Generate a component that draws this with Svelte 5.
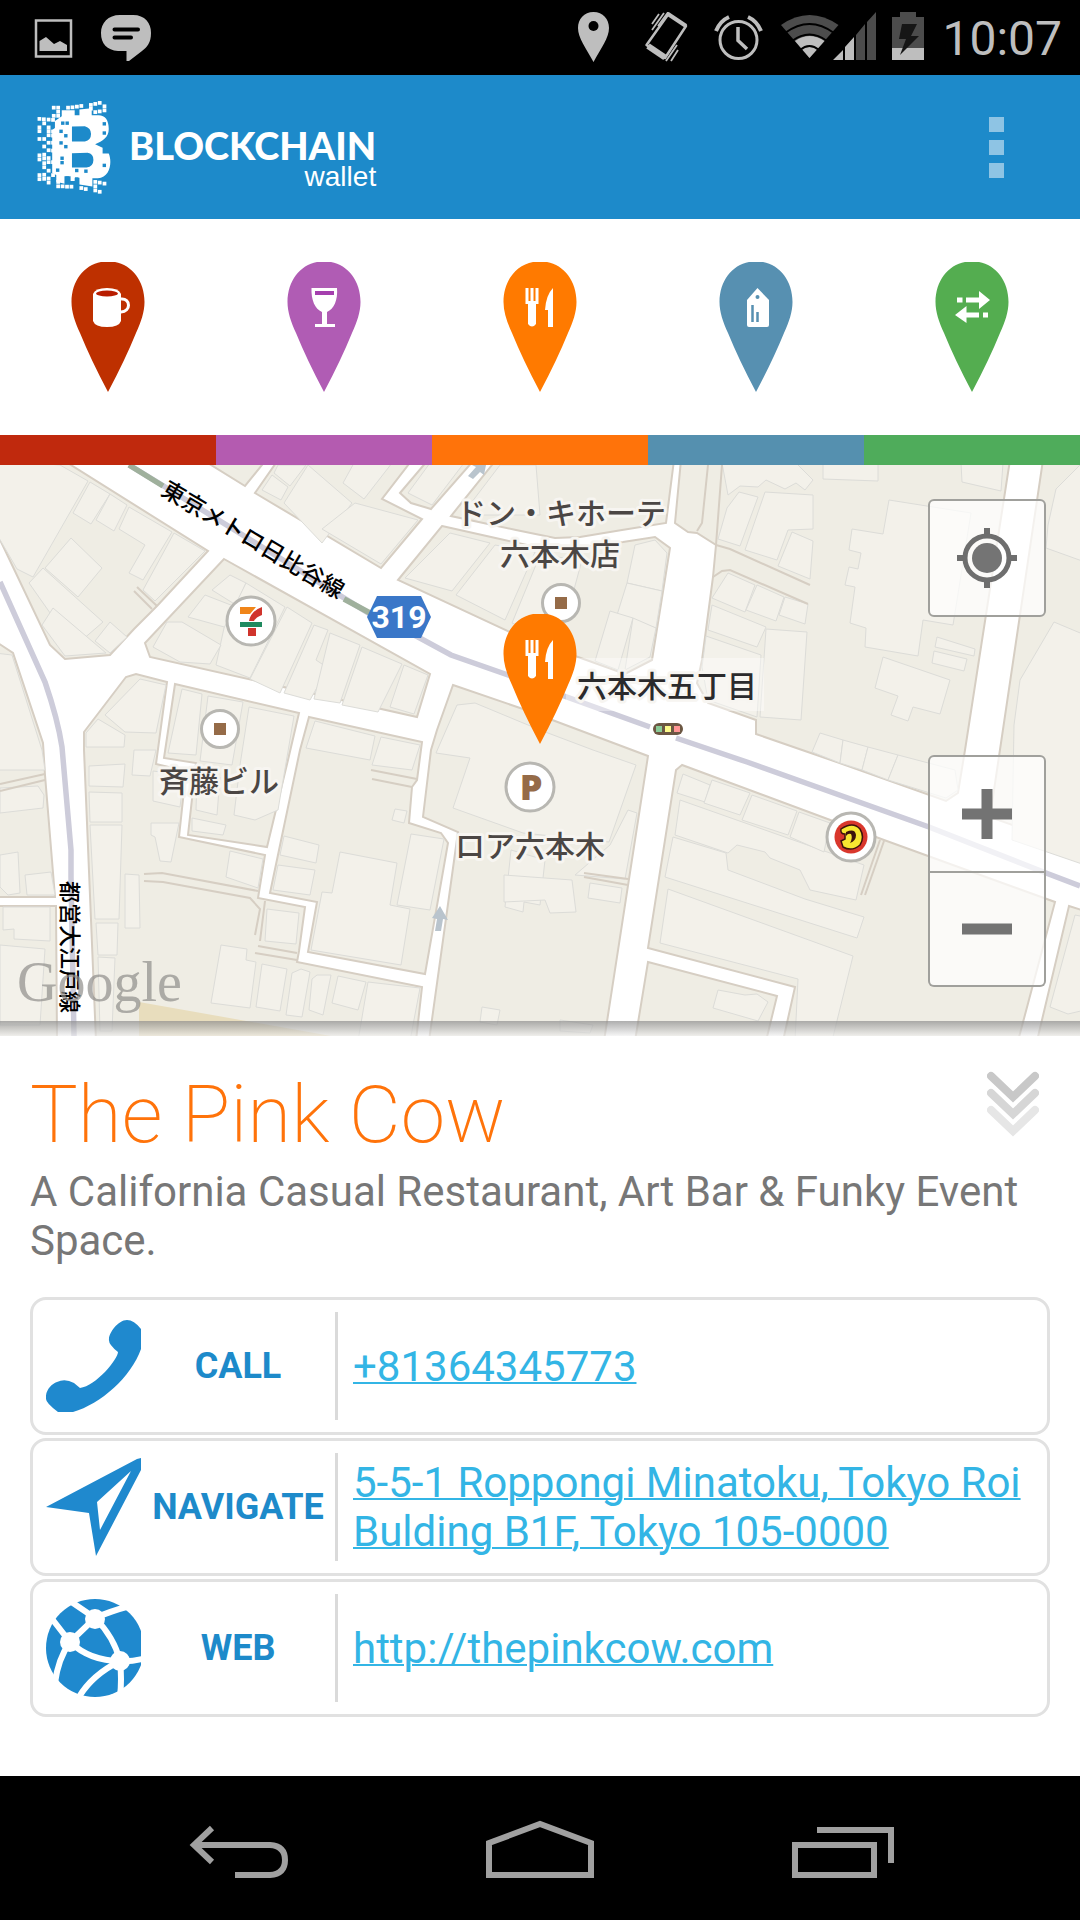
<script>
  // Merchant categories, one per pin in the filter strip
  const categories = [
    { id: 'coffee', label: 'Coffee', pin: '#be3000', bar: '#c0290d' },
    { id: 'drink', label: 'Drink', pin: '#b05cb4', bar: '#b45bb0' },
    { id: 'eat', label: 'Eat', pin: '#ff7a00', bar: '#ff730a' },
    { id: 'shop', label: 'Shop', pin: '#5790b1', bar: '#5590af' },
    { id: 'exchange', label: 'Exchange', pin: '#54ad50', bar: '#4fac5b' }
  ];

  let selected = $state('eat');
  let expanded = $state(true);
  let current = $derived(categories.find((c) => c.id === selected));

  const contacts = [
    { id: 'call', label: 'CALL', text: '+81364345773', href: 'tel:+81364345773' },
    {
      id: 'navigate',
      label: 'NAVIGATE',
      text: '5-5-1 Roppongi Minatoku, Tokyo Roi Bulding B1F, Tokyo 105-0000',
      href: 'geo:0,0?q=5-5-1+Roppongi+Minatoku'
    },
    { id: 'web', label: 'WEB', text: 'http://thepinkcow.com', href: 'http://thepinkcow.com' }
  ];

  // Loose pixels around the logo mark
  const pixels = [
    [48, 22], [61, 22], [61, 34], [48, 46], [61, 46], [90, 22], [103, 21], [116, 19], [129, 17], [157, 14],
    [170, 11], [183, 8], [157, 25], [197, 18], [197, 30], [183, 33], [170, 35], [6, 55], [19, 56], [33, 57],
    [46, 58], [20, 68], [6, 80], [33, 80], [6, 91], [33, 91], [46, 92], [6, 114], [20, 114], [33, 103],
    [46, 104], [20, 136], [33, 125], [46, 125], [33, 147], [46, 148], [6, 162], [20, 160], [6, 174], [20, 171],
    [33, 170], [20, 185], [20, 197], [33, 182], [46, 182], [6, 220], [20, 219], [33, 207], [6, 232], [20, 231],
    [33, 230], [33, 242], [46, 220], [61, 240], [61, 253], [74, 253], [87, 254], [100, 254], [129, 258], [142, 261],
    [170, 240], [170, 253], [170, 265], [183, 269], [183, 242], [197, 245]
  ];
  const pixelHoles = [
    [75, 68], [88, 68], [70, 92], [84, 105], [70, 126], [84, 137], [73, 171], [73, 184], [60, 206], [88, 229],
    [116, 207], [143, 209], [197, 70], [197, 97], [197, 192], [116, 232]
  ];

  // City blocks, everything between them is road
  const blocks = [
    '-5,-5 63,-5 208,86 157,141 134,164 110,190 65,194 50,180 -5,64',
    '203,-5 245,21 266,-5',
    '278,-5 255,28 381,103 422,54 382,34 412,-5',
    '428,-5 400,28 411,38 431,44 474,-5',
    '496,-5 451,51 516,65 555,73 580,72 622,65 666,58 674,-5',
    '442,61 500,74 545,84 575,83 623,77 655,72 670,83 652,195 625,209 578,192 510,167 398,115',
    '681,-5 675,58 688,67 697,68 716,80 713,112 702,195 697,218 708,238 756,255 756,269 831,295 946,336 958,328 965,285 1010,-5',
    '1043,-5 990,352 1085,386 1085,-5',
    '-5,176 13,188 43,278 45,310 55,432 -5,432',
    '-5,441 56,441 57,576 -5,576',
    '84,267 126,212 136,209 167,217 156,299 186,306 179,372 265,390 258,433 305,442 299,486 297,497 422,522 416,576 96,576 84,285',
    '175,219 299,248 288,295 267,382 188,370 196,298 164,293',
    '309,252 422,277 417,315 412,322 409,358 441,368 448,378 425,509 308,487 317,437 270,428 300,285',
    '224,94 430,209 417,252 150,192 145,178',
    '453,220 523,244 648,291 604,576 429,576 458,367 423,352 431,285 437,265',
    '682,300 676,305 648,483 795,522 783,576 1018,576 1055,437 884,375 833,356',
    '648,497 777,531 766,576 635,576',
    '1069,441 1085,446 1085,576 1037,576'
  ];

  const buildings = [
    '-5,-5 60,0 88,16 33,112 17,104 -5,66', '90,17 110,29 91,59 73,48', '110,29 127,40 114,66 96,55',
    '129,42 172,67 143,115 129,108 145,80 119,64', '174,68 205,86 155,136 143,125', '71,73 102,103 78,132 45,103',
    '43,103 103,157 74,182 29,118', '53,143 106,188 65,191 42,160', '110,157 127,172 110,188 95,176',
    '272,10 288,22 281,35 262,25', '278,0 306,0 290,21 274,8', '308,0 352,38 322,78 284,38', '354,-2 392,-2 364,34 343,18',
    '355,38 418,55 381,99 322,64', '408,28 430,-2 464,-2 432,40', '500,0 536,0 540,50 462,50',
    '450,68 490,78 452,126 405,113', '495,80 535,87 505,155 456,130', '540,90 582,95 560,176 512,158',
    '635,80 655,75 667,88 662,126 627,118', '627,118 662,126 656,163 617,150', '610,146 633,153 618,205 595,196',
    '633,153 656,163 650,192 625,205', '722,-2 796,-2 813,15 805,25 796,18 785,24 766,15 758,22 740,21 728,30',
    '739,27 758,32 740,81 718,74 727,43', '765,27 813,30 813,64 788,65 777,95 745,85', '792,67 813,76 810,114 778,101',
    '823,-2 878,-2 878,16 823,14', '889,35 971,48 953,160 923,155 918,191 865,182 866,163 850,158 855,122 845,120 849,102 858,104 861,88 849,85 852,64 883,69',
    '728,108 755,120 745,147 712,133', '757,120 784,132 776,156 746,145', '785,132 808,139 805,159 779,150',
    '712,140 766,162 757,182 708,165', '706,171 761,190 757,252 708,235 702,202', '766,164 807,167 801,255 760,252',
    '937,172 975,184 974,191 935,182', '934,186 967,194 964,206 932,198', '883,192 950,215 940,249 913,242 908,256 891,250 898,231 875,223',
    '961,-2 1003,-2 1001,26 962,17', '1048,60 1056,24 1085,-5 1085,97 1046,83', '1054,157 1085,170 1085,400 1012,375 1014,260 1020,215',
    '820,268 843,275 840,298 812,287', '843,275 868,282 862,305 840,298', '868,282 898,290 888,315 862,305', '898,290 955,305 958,325 946,333 888,315',
    '105,250 140,214 166,220 156,268 125,267', '86,268 98,254 125,270 124,282 86,282',
    '-5,188 12,190 42,285 45,305 -5,305', '0,323 38,321 44,330 43,343 0,348', '0,390 18,387 20,428 8,430 0,422',
    '25,410 51,407 55,430 27,430', '3,442 50,442 50,476 14,474 14,464 3,465', '0,480 45,484 40,560 0,560',
    '89,301 125,299 123,322 89,321', '89,327 122,328 122,357 90,357', '90,360 122,360 119,454 95,454', '125,409 139,410 140,463 125,463',
    '96,458 118,458 117,490 98,490', '98,492 115,493 112,566 100,566', '134,285 156,285 150,311 132,310', '153,306 184,310 180,342 153,336',
    '151,358 179,358 171,397 160,396 155,372 151,370', '182,224 202,229 196,290 168,288', '208,231 243,237 232,300 200,296',
    '249,242 294,251 278,345 255,355 234,350 240,300', '197,310 220,312 217,350 196,345', '192,353 226,360 223,370 192,366',
    '230,386 263,394 258,423 226,412', '284,371 319,380 316,398 280,390', '278,400 315,405 310,430 273,425',
    '315,256 375,271 370,295 306,283', '381,272 420,280 412,305 372,300', '340,387 397,398 390,440 410,444 401,500 311,485 322,427 332,428',
    '411,369 444,374 430,445 397,440', '395,344 407,346 404,358 392,355', '267,444 299,448 296,479 265,476', '221,480 247,484 246,495 256,497 250,543 211,538',
    '262,499 287,504 280,546 256,542', '301,504 310,507 302,552 286,550 292,508', '317,510 331,510 323,550 309,545 312,514',
    '338,511 366,517 358,545 332,538', '368,517 420,523 410,576 358,576', '230,110 246,118 236,140 212,125', '205,130 236,142 228,163 188,152',
    '246,118 285,142 250,213 216,200 224,163', '287,142 312,158 280,228 250,214', '314,160 328,165 316,195 328,203 310,235 284,228',
    '330,168 360,180 340,238 314,234', '362,182 402,199 378,247 342,240', '404,200 428,210 414,249 390,242', '167,157 182,157 221,180 210,199 180,197 153,182',
    '457,240 475,238 540,265 593,285 636,300 609,377 523,368 453,343 470,293 436,288', '511,385 545,395 540,440 524,437 523,447 505,442',
    '610,380 628,345 637,348 625,414 575,410', '504,410 572,415 576,447 550,448 545,435 504,437', '590,418 622,423 620,438 588,433',
    '683,309 710,320 705,337 677,328', '712,315 750,328 740,350 704,338', '680,335 864,400 856,435 810,425 800,405 770,393 765,387 737,380 728,388 675,370', '752,330 797,346 788,370 742,355',
    '799,347 830,358 824,387 790,372', '673,372 726,388 728,405 805,434 864,452 857,473 665,412', '668,424 853,491 832,576 795,576 798,514 660,478',
    '718,525 745,530 757,529 768,537 758,556 713,543', '1075,450 1085,452 1085,545 1068,549 1050,542', '482,542 500,545 497,560 480,557', '560,555 593,560 590,568 560,566'
  ];

  // Footpaths and block details drawn in the kerb colour
  const paths = [
    '722,0 716,80 730,84 810,120', '713,112 722,106 730,105 808,139', '708,0 702,58 697,66', '144,409 162,408 258,426',
    '144,416 163,417 250,433 260,444 255,470', '265,436 260,476', '258,481 297,488', '255,488 297,495', '371,305 417,314', '372,314 412,322',
    '0,319 45,309', '0,326 45,315', '584,408 628,414', '584,412 628,420', '880,375 861,430', '884,376 865,430', '137,122 157,141', '134,126 152,144'
  ];
</script>

{#snippet pin(id, color)}
  <svg class="pin" viewBox="0 0 74 130" aria-hidden="true">
    <path
      d="M30 0H44C61 3 73.500 19 73.500 40C73.500 50 70 60 65 71Q54 98 37 130Q20 98 9 71C4 60 .5 50 .5 40C.5 19 13 3 30 0Z"
      fill={color}
    />
    {#if id === 'coffee'}
      <path d="M22 32V59Q24 65 36 65T50 59V32Q48 26 36 26T22 32Z" fill="#fff" />
      <ellipse cx="36" cy="31.500" rx="11" ry="3" fill="#b81c00" />
      <path d="M50 37C60 36 60 50 50 50" fill="none" stroke="#fff" stroke-width="3" />
    {:else if id === 'drink'}
      <path d="M24.500 26H50C51 38 47 47 40 50V62H48V65H28V62H35V50C28 47 24 38 24.500 26Z" fill="#fff" />
      <path d="M28 29H47V33H28Z" fill="#a53fae" />
    {:else if id === 'eat'}
      <path d="M22.500 26h3v13h2V26h3v13h2V26h3V42H33V62q-4 5-8 0V42H22.500Z" fill="#fff" />
      <path d="M50 26V65H45V48H42Q43 33 50 26Z" fill="#fff" />
    {:else if id === 'shop'}
      <path d="M38.500 26L50 38V63Q50 65 48 65H30Q28 65 28 63V38Z" fill="#fff" />
      <circle cx="38.500" cy="35" r="2" fill={color} />
      <path d="M33.500 43V60M38.500 50V60" stroke={color} stroke-width="2.500" />
    {:else}
      <path d="M22 35.500h5.500v5H22ZM31 35.500H44V29L55 38L44 47V40.500H31ZM31.500 44L20 53L31.500 61V55.500H44V50.500H31.500ZM48 50.500h5v5h-5Z" fill="#fff" />
    {/if}
  </svg>
{/snippet}

<div class="screen">
  <div class="status-bar">
    <svg width="40" height="50" viewBox="0 0 40 50">
      <path d="M2 7.500H37V43.500H2Z" fill="none" stroke="#bebebe" stroke-width="2.500" />
      <path d="M5.500 38V28L12 24L20 31L26 28L33 32V38Z" fill="#bebebe" />
    </svg>
    <svg width="52" height="50" viewBox="0 0 52 50">
      <path d="M20 2H33C45 2 51 10 51 20C51 30 47 34 42 38L29 48H26.500V38H18C7 37 1 31 1 20C1 10 8 2 20 2Z" fill="#bebebe" />
      <path d="M14.500 16.500H38M14.500 24.500H31" stroke="#000" stroke-width="4" stroke-linecap="round" />
    </svg>
    <span class="spacer"></span>
    <svg width="60" height="52" viewBox="0 0 60 52">
      <path d="M25.500 0C35 0 41 7 41 16C41 26 33 36 25.500 50C18 36 10 26 10 16C10 7 16 0 25.500 0Z" fill="#bebebe" />
      <circle cx="25.500" cy="14" r="5" />
    </svg>
    <svg width="60" height="52" viewBox="0 0 60 52" fill="none" stroke="#bebebe">
      <path d="M28.500 2L46 14L25 46L6.500 33Z" stroke-width="2.500" stroke-linejoin="round" />
      <path d="M8 34L25 45.500" stroke-width="6" />
      <path d="M28 2L46 14" stroke-width="4" />
      <path d="M19 2L12 12M24 1L12 18M29 -1L18 14M37 33L26 49M38 38L31 49" stroke-width="1.800" />
    </svg>
    <svg width="52" height="52" viewBox="0 0 52 52" fill="none" stroke="#bebebe">
      <circle cx="26.500" cy="28" r="18.500" stroke-width="3" />
      <path d="M26 15V28.500L35 37" stroke-width="3.500" />
      <path d="M4 19Q8 9 17 5M49 19Q45 9 36 5" stroke-width="4" />
    </svg>
    <svg width="100" height="52" viewBox="0 0 100 52">
      <path d="M5 13Q33.500 -7 62.500 13L33.500 46Z" fill="#4c4c4c" />
      <path d="M19 29Q33.500 19 48.500 29L33.500 46Z" fill="#bebebe" />
      <path d="M9 21Q33.500 3 58 21M16 29Q33.500 16 51 29M24 38Q33.500 30 43 38" fill="none" stroke="#000" stroke-width="2" />
      <path d="M57 48L67 38V48ZM69 35L78 25V48H69Z" fill="#bebebe" />
      <path d="M80 23L89 12V48H80ZM91 10L100 0V48H91Z" fill="#4c4c4c" />
    </svg>
    <svg width="42" height="52" viewBox="0 0 42 52">
      <path d="M4 5H12V0H28V5H36V48H4Z" fill="#4c4c4c" />
      <path d="M4 36H36V48H4Z" fill="#bebebe" />
      <path d="M14 12H29L23 24H31L12 43L18 27H11Z" fill="#161616" />
    </svg>
    <span class="clock">10:07</span>
  </div>

  <header>
    <div class="logo">
      <svg width="74" height="94" viewBox="0 0 216 276" aria-hidden="true">
        <path
          fill="#fff"
          fill-rule="evenodd"
          d="M72 30H110V45H124V28L160 24V45H180C200 45 210 60 210 85C210 110 192 120 170 130L192 140V157H210C220 180 216 226 178 230H162V254L124 248V228H110V238H98V224H80V246L56 240V220L44 214V88L52 82V62L72 48ZM102 78V122H140Q158 118 158 100T140 77ZM102 156V198H145Q165 195 165 176T148 155Z"
        />
        {#each pixels as [x, y]}
          <rect x={x - 5} y={y - 5} width="11" height="11" fill="#fff" />
        {/each}
        {#each pixelHoles as [x, y]}
          <rect x={x - 5} y={y - 5} width="10" height="10" fill="#1d8aca" />
        {/each}
      </svg>
      <div class="wordmark">
        <strong>BLOCKCHAIN</strong>
        <span>wallet</span>
      </div>
    </div>
    <button class="overflow" aria-label="More options"><i></i><i></i><i></i></button>
  </header>

  <nav class="filters">
    {#each categories as cat}
      <button aria-label={cat.label} aria-pressed={selected === cat.id} onclick={() => (selected = cat.id)}>
        {@render pin(cat.id, cat.pin)}
        <span class="bar" style="background: {cat.bar}"></span>
      </button>
    {/each}
  </nav>

  <section class="map">
    <svg class="tiles" viewBox="0 0 1080 571" role="img" aria-label="Map of Roppongi">
      <rect width="1080" height="571" fill="#fff" />
      <g class="blocks">
        {#each blocks as points}<polygon {points} />{/each}
      </g>
      <g class="buildings">
        {#each buildings as points}<polygon {points} />{/each}
      </g>
      <path d="M139 537L331 571H139Z" fill="#e8ddbd" />
      <g class="paths">
        {#each paths as points}<polyline {points} />{/each}
      </g>

      <!-- train lines -->
      <g fill="none" stroke="#cdccda" stroke-width="5.500">
        <path d="M129 0L162 20L370 149L418 172L451 190L508 210L564 231L650 262M676 273L747 297L929 362L1046 408L1080 421" />
        <path d="M0 117L45 217Q58 255 62 282L71 385V412L74 571" />
        <path d="M129 0L163 21M344 134L370 148" stroke="#9fb09c" />
      </g>

      <path d="M440 441L448 455L443 454L441 466H435L437 454L432 453Z" fill="#b9c4cd" />
      <path d="M486 0L484 10L480 7L473 14L468 11L476 2L472 0Z" fill="#b9c4cd" />

      <g class="line-name">
        <text transform="translate(253 75) rotate(30.6)" y="8" font-size="23">東京メトロ日比谷線</text>
        <text transform="translate(70 482) rotate(90)" y="8" font-size="22">都営大江戸線</text>
      </g>

      <rect x="566" y="193" width="198" height="53" fill="#fff" opacity=".4" />
      <g class="place">
        <text x="561" y="59">ドン・キホーテ</text>
        <text x="560" y="100">六本木店</text>
        <text x="219" y="327">斉藤ビル</text>
        <text x="530" y="392">ロア六本木</text>
        <text x="667" y="232" fill="#2b2a2c">六本木五丁目</text>
      </g>

      <g fill="#fff" stroke="#b8b7b2" stroke-width="3">
        <circle cx="251" cy="156" r="24" />
        <circle cx="220" cy="264" r="18.500" />
        <circle cx="561" cy="138" r="18.500" />
        <circle cx="530" cy="322" r="24" />
        <circle cx="851" cy="372" r="24" />
      </g>
      <path d="M214 258h12v12h-12ZM555 132h12v12h-12Z" fill="#956b48" />
      <text class="parking" x="531" y="335">P</text>
      <path d="M240 142H256L250 149H240Z" fill="#f08519" />
      <path d="M262 142V150Q256 152 254 156H249Q251 146 262 142ZM248 163H256V171H248Z" fill="#d0342c" />
      <path d="M240 157H262V162H240Z" fill="#1f8a5f" />
      <circle cx="851" cy="372" r="16.500" fill="#d9372c" />
      <path d="M841 364Q853 356 860 364Q865 372 860 380Q852 387 843 382L841 376L845 374V369Q840 369 841 364Z" fill="#f7e731" stroke="#3b130c" stroke-width="1.500" />
      <path d="M846 367Q855 363 856 370Q856 376 850 378Q853 373 851 369Q848 368 846 371Z" fill="#3b130c" />

      <path d="M377 131H421L431 152L421 173H377L367 152Z" fill="#3a77c8" />
      <text class="route" x="399" y="163">319</text>

      <rect x="653" y="258" width="30" height="12" rx="6" fill="#6c5743" />
      <path d="M656 261h6v6h-6Z" fill="#8acb97" />
      <path d="M665 261h6v6h-6Z" fill="#fdfb8b" />
      <path d="M674 261h6v6h-6Z" fill="#ff9594" />

      <text class="google" x="17" y="536">Google</text>
    </svg>

    <div class="marker">{@render pin(selected, current.pin)}</div>

    <button class="map-btn locate" aria-label="My location">
      <svg width="60" height="60" viewBox="0 0 60 60">
        <path d="M30 0V10M30 50V60M0 30H10M50 30H60" stroke="#6e6e6e" stroke-width="6" />
        <circle cx="30" cy="30" r="22" fill="none" stroke="#6e6e6e" stroke-width="5" />
        <circle cx="30" cy="30" r="15" fill="#747474" />
      </svg>
    </button>
    <div class="zoom">
      <button class="map-btn" aria-label="Zoom in">
        <svg width="50" height="50" viewBox="0 0 50 50"><path d="M25 0V50M0 25H50" stroke="#737373" stroke-width="11" /></svg>
      </button>
      <button class="map-btn" aria-label="Zoom out">
        <svg width="50" height="50" viewBox="0 0 50 50"><path d="M0 25H50" stroke="#737373" stroke-width="11" /></svg>
      </button>
    </div>
    <div class="map-shadow"></div>
  </section>

  <main>
    <div class="title-row">
      <h1>The Pink Cow</h1>
      <button class="collapse" aria-label="Toggle details" aria-expanded={expanded} onclick={() => (expanded = !expanded)}>
        <svg width="52" height="66" viewBox="0 0 52 66" fill="none" stroke-width="8" stroke-linecap="round">
          <path d="M4 39L26 60L48 39" stroke="#e6e6e6" />
          <path d="M4 22L26 44L48 22" stroke="#fff" stroke-width="11" />
          <path d="M4 22L26 43L48 22" stroke="#d6d6d6" />
          <path d="M4 5L26 27L48 5" stroke="#fff" stroke-width="11" />
          <path d="M4 5L26 26L48 5" stroke="#c8c8c8" />
        </svg>
      </button>
    </div>
    <p>A California Casual Restaurant, Art Bar &amp; Funky Event Space.</p>

    {#if expanded}
      <ul>
        {#each contacts as item}
          <li>
            <svg class="icon" viewBox="0 0 95 98" fill="#1f89ce" aria-hidden="true">
              {#if item.id === 'call'}
                <path d="M81 3Q88 3 95 12V32C85 60 55 87 27 95H12Q0 86 0 82C-1 74 5 67 11 65Q19 61 28 66L34 71C50 69 72 42 72 35Q62 27 63 22C63 16 72 3 81 3Z" />
              {:else if item.id === 'navigate'}
                <path fill-rule="evenodd" d="M0 49L91 1L95 0V12L50 98L43 55ZM85 13L51 44L54 72Z" />
              {:else}
                <circle cx="49" cy="49" r="49" />
                <g fill="none" stroke="#fff" stroke-width="6">
                  <path d="M49 19L24 2M49 19Q65 12 84 7M49 19L24 43L3 16M24 43Q12 60 9 84M24 43Q44 62 74 62Q68 38 49 19M74 62Q86 63 100 59M74 62Q76 80 74 98M74 62Q46 76 33 98" />
                </g>
                <g fill="#fff"><circle cx="49" cy="20" r="10" /><circle cx="24" cy="43" r="10" /><circle cx="74" cy="62" r="10" /></g>
              {/if}
            </svg>
            <span class="label">{item.label}</span>
            <div class="value"><a href={item.href}>{item.text}</a></div>
          </li>
        {/each}
      </ul>
    {/if}
  </main>

  <footer>
    <button aria-label="Back">
      <svg width="104" height="60" viewBox="0 0 104 60" fill="none" stroke="#a0a0a0" stroke-width="6">
        <path d="M26 8L8 25L26 42M8 25H84Q99 26 99 40T84 55H49" />
      </svg>
    </button>
    <button aria-label="Home">
      <svg width="108" height="60" viewBox="0 0 108 60" fill="none" stroke="#a0a0a0" stroke-width="6">
        <path d="M3 23L54 4L105 23V55H3Z" />
      </svg>
    </button>
    <button aria-label="Recent apps">
      <svg width="104" height="60" viewBox="0 0 104 60" fill="none" stroke="#a0a0a0" stroke-width="6">
        <path d="M5 25H84V55H5ZM27 10H101V43" />
      </svg>
    </button>
  </footer>
</div>

<style>
  :global(body) {
    margin: 0;
    background: #fff;
  }

  .screen {
    display: flex;
    flex-direction: column;
    min-height: 100vh;
    font-family: Roboto, "Noto Sans CJK JP", sans-serif;
  }

  button {
    padding: 0;
    border: 0;
    background: none;
    cursor: pointer;
  }

  svg {
    display: block;
  }

  .status-bar {
    display: flex;
    align-items: center;
    gap: 12px;
    height: 75px;
    padding: 0 18px 0 34px;
    background: #000;
  }

  .status-bar svg {
    flex: none;
  }

  .status-bar svg + svg:nth-child(2) {
    margin-left: 14px;
  }

  .spacer {
    flex: 1;
  }

  .clock {
    padding-top: 3px;
    color: #bebebe;
    font-size: 48px;
    line-height: 72px;
  }

  header {
    display: flex;
    align-items: center;
    justify-content: space-between;
    height: 144px;
    padding: 0 60px 0 37px;
    background: #1d8aca;
  }

  .logo {
    display: flex;
    align-items: center;
    gap: 18px;
    color: #fff;
  }

  .wordmark {
    display: flex;
    flex-direction: column;
    align-items: flex-end;
    padding-top: 28px;
  }

  .wordmark strong {
    font: 900 38px/32px Lato, sans-serif;
  }

  .wordmark span {
    font: 28px/32px "Liberation Sans", sans-serif;
  }

  .overflow {
    display: flex;
    flex-direction: column;
    gap: 8px;
    padding: 16px;
  }

  .overflow i {
    width: 15px;
    height: 15px;
    background: #8ec4e4;
  }

  .filters {
    display: flex;
  }

  .filters button {
    flex: 1;
    display: flex;
    flex-direction: column;
    align-items: center;
    padding-top: 43px;
  }

  .pin {
    width: 74px;
    height: 130px;
  }

  .bar {
    width: 100%;
    height: 30px;
    margin-top: 43px;
  }

  .map {
    position: relative;
    overflow: hidden;
  }

  .tiles {
    width: 100%;
    height: auto;
  }

  .blocks {
    fill: #efede4;
    stroke: #d6cec3;
    stroke-width: 2;
  }

  .buildings {
    fill: #f3f1ea;
    stroke: #dcdcd8;
    stroke-width: 1;
  }

  .paths {
    fill: none;
    stroke: #d6cec3;
    stroke-width: 2;
  }

  .tiles text {
    text-anchor: middle;
    font-family: "Noto Sans CJK JP", sans-serif;
    font-weight: 500;
  }

  .line-name {
    fill: #000;
  }

  .place {
    fill: #4b4644;
    stroke: #f7f5f1;
    stroke-width: 6px;
    stroke-linejoin: round;
    paint-order: stroke;
    font-size: 30px;
  }

  .tiles .parking {
    fill: #956b48;
    font: 800 36px "Open Sans", sans-serif;
  }

  .tiles .route {
    fill: #fff;
    font: 700 32px "Liberation Sans Narrow", Roboto, sans-serif;
  }

  .tiles .google {
    fill: #8e8d8a;
    fill-opacity: 0.7;
    text-anchor: start;
    font: 56px "Liberation Serif", serif;
  }

  .marker {
    position: absolute;
    top: 149px;
    left: 50%;
    transform: translateX(-50%);
  }

  .map-btn {
    display: grid;
    place-items: center;
    box-sizing: border-box;
    width: 118px;
    height: 118px;
    border: 2px solid #a0a09c;
    border-radius: 6px;
    background: rgba(255, 255, 255, 0.72);
  }

  .locate {
    position: absolute;
    top: 34px;
    right: 34px;
  }

  .zoom {
    position: absolute;
    top: 290px;
    right: 34px;
  }

  .zoom .map-btn:first-child {
    border-radius: 6px 6px 0 0;
  }

  .zoom .map-btn:last-child {
    height: 114px;
    border-top: 0;
    border-radius: 0 0 6px 6px;
  }

  .map-shadow {
    position: absolute;
    right: 0;
    bottom: 0;
    left: 0;
    height: 15px;
    background: linear-gradient(rgba(140, 140, 140, 0.7), rgba(240, 240, 240, 0.6));
  }

  main {
    flex: 1;
    padding: 27px 30px 57px;
  }

  .title-row {
    display: flex;
    align-items: flex-start;
    justify-content: space-between;
  }

  h1 {
    margin: 0;
    color: #ff730a;
    font-size: 80px;
    font-weight: 200;
    line-height: 104px;
  }

  .collapse {
    margin: 8px 11px 0 0;
  }

  p {
    margin: 0;
    color: #777;
    font-size: 42px;
    line-height: 49px;
  }

  ul {
    display: flex;
    flex-direction: column;
    gap: 3px;
    margin: 32px 0 0;
    padding: 0;
    list-style: none;
  }

  li {
    display: flex;
    align-items: center;
    box-sizing: border-box;
    min-height: 138px;
    padding: 12px 13px;
    border: 3px solid #e1e1e1;
    border-radius: 16px;
  }

  .icon {
    flex: none;
    width: 95px;
    height: 98px;
  }

  .label {
    flex: none;
    width: 194px;
    color: #1d8aca;
    font-size: 36px;
    font-weight: 700;
    text-align: center;
  }

  .value {
    flex: 1;
    display: flex;
    align-items: center;
    min-height: 108px;
    padding-left: 15px;
    border-left: 3px solid #dadada;
  }

  .value a {
    color: #33b5e5;
    font-size: 42px;
    line-height: 49px;
    text-decoration-thickness: 2px;
  }

  footer {
    display: flex;
    justify-content: center;
    box-sizing: border-box;
    height: 144px;
    padding-top: 4px;
    background: #000;
  }

  footer button {
    display: grid;
    place-items: center;
    width: 28%;
  }
</style>
